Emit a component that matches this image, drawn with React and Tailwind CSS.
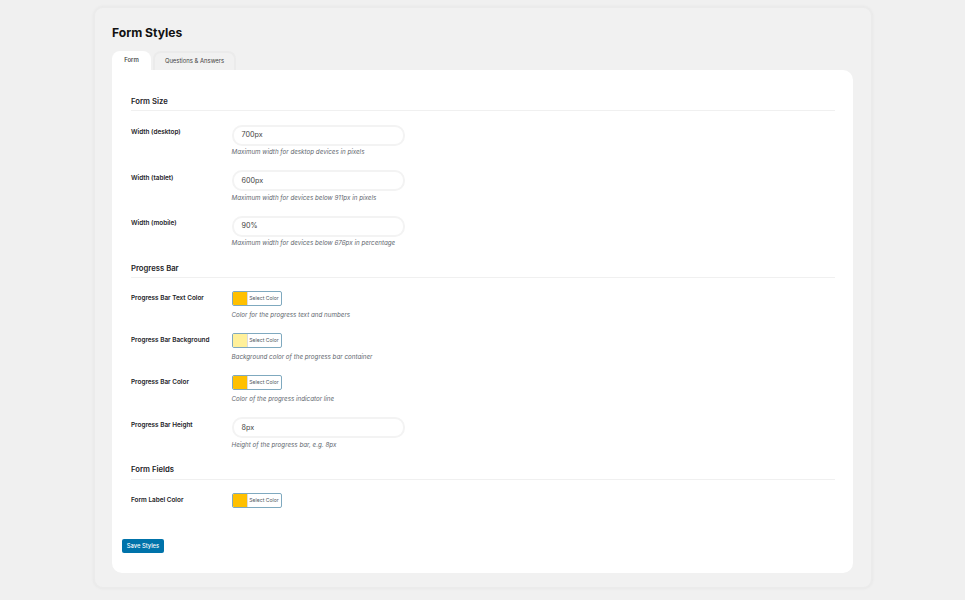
const font = { fontFamily: 'Inter, "Liberation Sans", sans-serif' };

function SectionTitle({ children, className }) {
  return (
    <h2 className={'text-[7.7px] leading-[12px] font-semibold text-[#1d2327] pb-[2.5px] border-b border-[#f0f0f0] ' + className}>{children}</h2>
  );
}

function TextRow({ label, value, help, className }) {
  return (
    <div className={'flex ' + className}>
      <label className="w-[100.5px] shrink-0 text-[6.4px] leading-[10px] font-semibold text-[#1d2327] pt-[2px]">{label}</label>
      <div>
        <div className="w-[173px] h-[21px] -mt-[0.5px] rounded-[10px] border-2 border-[#f3f3f3] bg-white flex items-center pl-[8px] pt-[1px] text-[7.2px] text-[#444]">{value}</div>
        <p className="mt-[1.5px] text-[6.25px] leading-[10px] italic text-[#646970]">{help}</p>
      </div>
    </div>
  );
}

function ColorButton({ color }) {
  return (
    <div className="w-[50px] h-[15px] flex rounded-[2px] border border-[#7fa9bf] bg-white overflow-hidden">
      <span className="w-[14px] h-full" style={{ backgroundColor: color }} />
      <span className="flex-1 text-center text-[5.1px] leading-[13px] text-[#50575e] border-l border-[#dcdcde]">Select Color</span>
    </div>
  );
}

function ColorRow({ label, color, help, className }) {
  return (
    <div className={'flex ' + className}>
      <label className="w-[100.5px] shrink-0 text-[6.4px] leading-[10px] font-semibold text-[#1d2327] pt-[2px]">{label}</label>
      <div>
        <ColorButton color={color} />
        {help && <p className="mt-[4px] text-[6.25px] leading-[10px] italic text-[#646970]">{help}</p>}
      </div>
    </div>
  );
}

export default function App() {
  return (
    <div className="w-full h-[600px] bg-[#f0f0f0] pt-[6px] overflow-hidden" style={font}>
      <div className="w-[780px] h-[583px] ml-[93px] rounded-[10px] border-2 border-[#ebebeb] bg-[#f1f1f1] pl-[17px] pr-[18px] pt-[16px] shadow-[0_0_3px_rgba(0,0,0,0.04)]">
        <h1 className="text-[12.1px] leading-[18px] font-bold text-[#111]">Form Styles</h1>

        <div className="flex gap-[2px] mt-[9px] h-[19px]">
          <div className="w-[39px] h-[19px] rounded-t-[8px] bg-white text-center text-[6px] leading-[18px] font-medium text-[#333]">Form</div>
          <div className="w-[83px] h-[19px] rounded-t-[8px] border-2 border-b-0 border-[#ebebeb] text-center text-[5.9px] leading-[15px] text-[#444]">Questions &amp; Answers</div>
        </div>

        <div className="h-[503px] rounded-b-[10px] rounded-tr-[10px] bg-white pt-[25.5px] pl-[19px] pr-[18px] relative">
          <SectionTitle>Form Size</SectionTitle>
          <TextRow className="mt-[14px]" label="Width (desktop)" value="700px" help="Maximum width for desktop devices in pixels" />
          <TextRow className="mt-[13.5px]" label="Width (tablet)" value="600px" help="Maximum width for devices below 911px in pixels" />
          <TextRow className="mt-[13.5px]" label="Width (mobile)" value="90%" help="Maximum width for devices below 676px in percentage" />

          <SectionTitle className="mt-[14.5px]">Progress Bar</SectionTitle>
          <ColorRow className="mt-[13px]" label="Progress Bar Text Color" color="#ffc000" help="Color for the progress text and numbers" />
          <ColorRow className="mt-[13px]" label="Progress Bar Background" color="#fff09a" help="Background color of the progress bar container" />
          <ColorRow className="mt-[13px]" label="Progress Bar Color" color="#ffc000" help="Color of the progress indicator line" />
          <TextRow className="mt-[13.5px]" label="Progress Bar Height" value="8px" help="Height of the progress bar, e.g. 8px" />

          <SectionTitle className="mt-[14.5px]">Form Fields</SectionTitle>
          <ColorRow className="mt-[13px]" label="Form Label Color" color="#ffc000" />

          <button className="mt-[31px] -ml-[9px] w-[42px] h-[14px] rounded-[2px] bg-[#0073aa] text-white text-[5.8px] leading-[14px] font-medium text-center">Save Styles</button>
        </div>
      </div>
    </div>
  );
}
